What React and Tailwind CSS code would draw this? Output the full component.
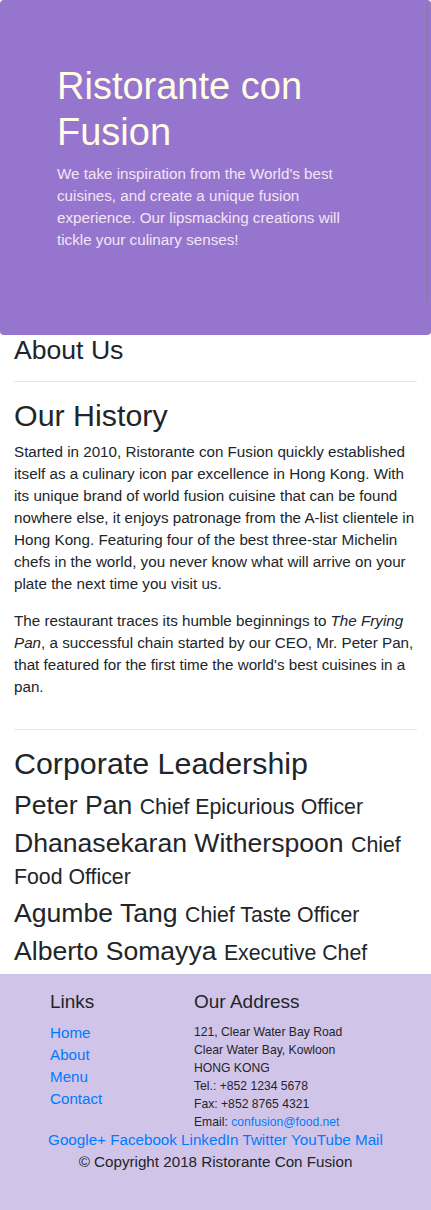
export default function App() {
  const leaders = [
    { name: 'Peter Pan', title: 'Chief Epicurious Officer' },
    { name: 'Dhanasekaran Witherspoon', title: 'Chief Food Officer' },
    { name: 'Agumbe Tang', title: 'Chief Taste Officer' },
    { name: 'Alberto Somayya', title: 'Executive Chef' },
  ];

  return (
    <div className="w-[431px] min-h-[1210px] bg-white text-[#212529] font-['Liberation_Sans',Arial,sans-serif] flex flex-col">
      {/* jumbotron */}
      <div className="relative h-[335px] bg-[#9575cd] rounded-[4px] pl-[57px] pt-[63px]">
        <h1 className="text-[38px] leading-[46px] text-[#fffde7] font-normal m-0">
          Ristorante con<br />Fusion
        </h1>
        <p className="mt-[8px] w-[300px] text-[15.2px] leading-[22px] text-[#f3e5f5]">
          We take inspiration from the World's best cuisines, and create a unique fusion experience. Our lipsmacking creations will tickle your culinary senses!
        </p>
        <div className="absolute right-[3px] top-[4px] h-[298px] w-[2px] bg-[#8c7aa8]" />
      </div>

      {/* content */}
      <div className="px-[14px]">
        <h3 className="text-[26.6px] leading-[32px] -mt-[1px]">About Us</h3>
        <hr className="mt-[15px] mb-[15px] border-0 h-px bg-[#e6e6e6]" />

        <h2 className="text-[30.4px] leading-[36.5px]">Our History</h2>
        <p className="mt-[7.6px] text-[15.2px] leading-[22px]">
          Started in 2010, Ristorante con Fusion quickly established itself as a culinary icon par excellence in Hong Kong. With its unique brand of world fusion cuisine that can be found nowhere else, it enjoys patronage from the A-list clientele in Hong Kong. Featuring four of the best three-star Michelin chefs in the world, you never know what will arrive on your plate the next time you visit us.
        </p>
        <p className="mt-[15px] text-[15.2px] leading-[22px]">
          The restaurant traces its humble beginnings to <em>The Frying Pan</em>, a successful chain started by our CEO, Mr. Peter Pan, that featured for the first time the world's best cuisines in a pan.
        </p>
        <hr className="mt-[31px] mb-[15px] border-0 h-px bg-[#e6e6e6]" />

        <h2 className="text-[30.4px] leading-[36.5px]">Corporate Leadership</h2>
        <div className="mt-[7.6px] flex flex-col gap-[6px]">
          {leaders.map((l) => (
            <h3 key={l.name} className="text-[26.6px] leading-[32px]">
              {l.name} <small className="text-[21.3px] leading-none">{l.title}</small>
            </h3>
          ))}
        </div>
      </div>

      {/* footer */}
      <footer className="mt-[7px] flex-1 bg-[#d1c4e9] pt-[17px] pb-[37px]">
        <div className="flex pl-[50px]">
          <div className="w-[144px]">
            <h5 className="text-[19px] leading-[22.8px]">Links</h5>
            <ul className="mt-[7.6px] flex flex-col text-[15.2px] leading-[22px] text-[#007bff]">
              <li>Home</li>
              <li>About</li>
              <li>Menu</li>
              <li>Contact</li>
            </ul>
          </div>
          <div>
            <h5 className="text-[19px] leading-[22.8px]">Our Address</h5>
            <address className="mt-[9.2px] not-italic text-[12.16px] leading-[18px]">
              121, Clear Water Bay Road<br />
              Clear Water Bay, Kowloon<br />
              HONG KONG<br />
              Tel.: +852 1234 5678<br />
              Fax: +852 8765 4321<br />
              Email: <span className="text-[#007bff]">confusion@food.net</span>
            </address>
          </div>
        </div>
        <div className="-mt-[2px] text-center text-[15.2px] leading-[22px]">
          <div className="text-[#007bff]">Google+ Facebook LinkedIn Twitter YouTube Mail</div>
          <div>© Copyright 2018 Ristorante Con Fusion</div>
        </div>
      </footer>
    </div>
  );
}
